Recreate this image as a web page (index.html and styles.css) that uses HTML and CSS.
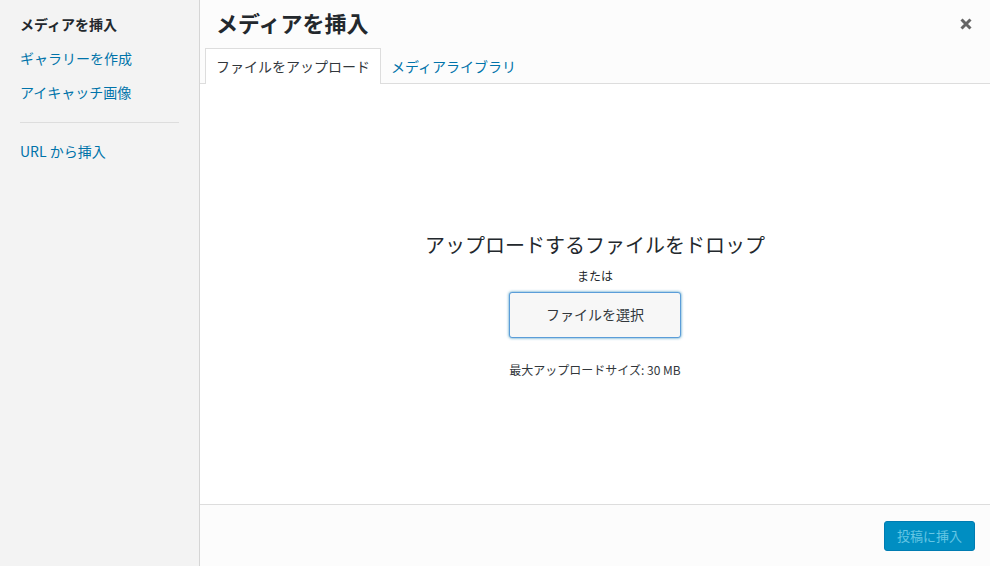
FILE: index.html
```html
<!DOCTYPE html>
<html lang="ja">
<head>
<meta charset="utf-8">
<title>メディアを挿入</title>
<link rel="stylesheet" href="styles.css">
</head>
<body>
<div class="modal">
  <aside class="menu">
    <div class="menu-item active">メディアを挿入</div>
    <a class="menu-item" href="#">ギャラリーを作成</a>
    <a class="menu-item" href="#">アイキャッチ画像</a>
    <div class="separator"></div>
    <a class="menu-item" href="#">URL から挿入</a>
  </aside>
  <main class="frame">
    <header class="frame-header">
      <h1 class="frame-title">メディアを挿入</h1>
      <nav class="router">
        <a class="tab active" href="#">ファイルをアップロード</a>
        <a class="tab" href="#">メディアライブラリ</a>
      </nav>
    </header>
    <section class="content">
      <h2 class="drop-title">アップロードするファイルをドロップ</h2>
      <p class="or">または</p>
      <button class="select-btn" type="button">ファイルを選択</button>
      <p class="max-size">最大アップロードサイズ: 30 MB</p>
    </section>
    <footer class="toolbar">
      <button class="primary-btn" type="button">投稿に挿入</button>
    </footer>
    <button class="close" type="button" aria-label="閉じる">
      <svg width="12" height="12" viewBox="0 0 12 12"><path d="M1.5 1.5 L10.5 10.5 M10.5 1.5 L1.5 10.5" stroke="#666" stroke-width="3" stroke-linecap="butt"/></svg>
    </button>
  </main>
</div>
</body>
</html>
```

FILE: styles.css
```css
* { box-sizing: border-box; }
html, body {
  margin: 0;
  padding: 0;
  width: 990px;
  height: 566px;
  overflow: hidden;
}
body {
  font-family: "Noto Sans CJK JP", "Noto Sans", sans-serif;
  color: #23282d;
  background: #fff;
}
.modal {
  display: flex;
  width: 990px;
  height: 566px;
}
.menu {
  width: 200px;
  flex: none;
  background: #f3f3f3;
  border-right: 1px solid #d5d5d5;
  padding-top: 8px;
  display: flex;
  flex-direction: column;
}
.menu-item {
  display: block;
  padding: 7px 20px 9px;
  font-size: 14px;
  line-height: 18px;
  color: #0073aa;
  text-decoration: none;
}
.menu-item.active {
  color: #23282d;
  font-weight: bold;
}
.separator {
  height: 1px;
  background: #ddd;
  margin: 12px 20px;
}
.frame {
  position: relative;
  flex: 1;
  display: flex;
  flex-direction: column;
  min-width: 0;
}
.frame-header {
  background: #fcfcfc;
}
.frame-title {
  margin: 0;
  padding: 0 16px;
  height: 48px;
  line-height: 45px;
  font-size: 22px;
  font-weight: bold;
  color: #23282d;
}
.router {
  display: flex;
  height: 36px;
  padding-left: 5px;
  border-bottom: 1px solid #ddd;
}
.tab {
  display: block;
  height: 36px;
  padding: 0 10px;
  line-height: 34px;
  font-size: 14px;
  color: #0073aa;
  text-decoration: none;
  border: 1px solid transparent;
  border-bottom: none;
}
.tab + .tab {
  padding-left: 9px;
}
.tab.active {
  color: #32373c;
  background: #fff;
  border-color: #ddd;
}
.content {
  flex: 1;
  background: #fff;
  padding-top: 147px;
  display: flex;
  flex-direction: column;
  align-items: center;
}
.drop-title {
  margin: 0;
  font-size: 20px;
  line-height: 28px;
  font-weight: normal;
  color: #23282d;
}
.or {
  margin: 8px 0 0;
  font-size: 12px;
  line-height: 18px;
  color: #23282d;
}
.select-btn {
  margin-top: 7px;
  height: 46px;
  padding: 0 36px 2px;
  font-family: inherit;
  font-size: 14px;
  color: #32373c;
  background: #f7f7f7;
  border: 1px solid #5b9dd9;
  border-radius: 3px;
  box-shadow: 0 0 3px rgba(0, 115, 170, 0.8);
}
.max-size {
  margin: 23px 0 0;
  font-size: 12px;
  line-height: 18px;
  color: #32373c;
}
.toolbar {
  height: 62px;
  background: #fcfcfc;
  border-top: 1px solid #ddd;
  display: flex;
  justify-content: flex-end;
  align-items: flex-start;
  padding: 16px 15px 0 0;
}
.primary-btn {
  height: 30px;
  padding: 0 12px 1px;
  font-family: inherit;
  font-size: 13px;
  line-height: 27px;
  color: #66c6e4;
  background: #008ec2;
  border: 1px solid #007cb2;
  border-radius: 3px;
}
.close {
  position: absolute;
  top: 17px;
  right: 17px;
  width: 14px;
  height: 14px;
  padding: 1px;
  border: none;
  background: none;
  display: flex;
  align-items: center;
  justify-content: center;
}
```
